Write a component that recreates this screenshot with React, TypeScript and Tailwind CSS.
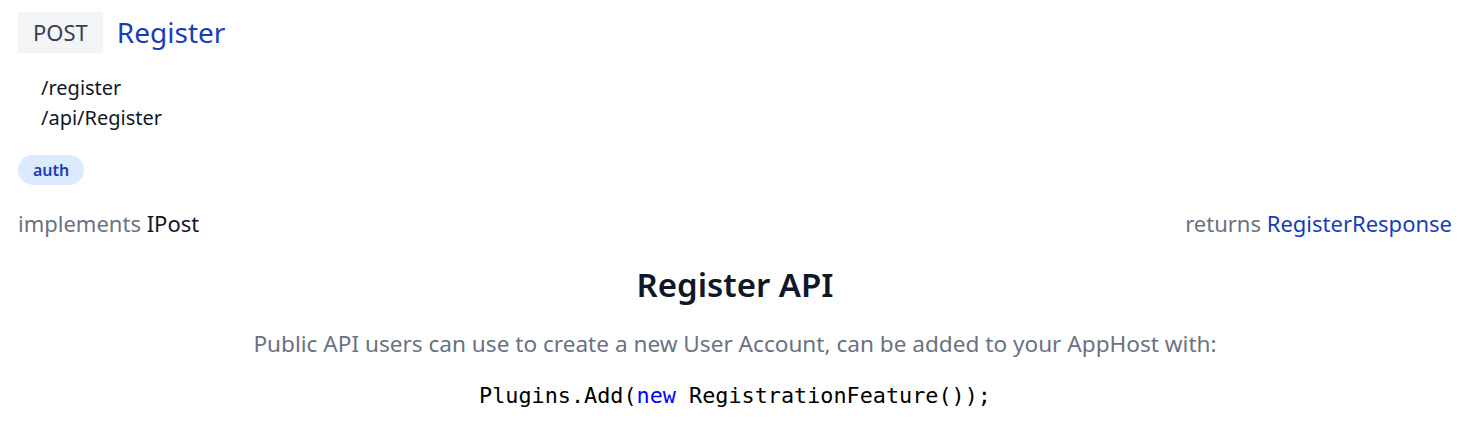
export default function App() {
  return (
    <div className="min-h-[442px] bg-white pl-[18px] pr-[22px] pt-[11px] font-['Noto_Sans',sans-serif] text-gray-900">
      {/* Header */}
      <div className="flex items-center gap-[14px]">
        <span className="flex h-[41px] items-center bg-gray-100 px-[15px] text-[22px] text-gray-700">
          POST
        </span>
        <h2 className="text-[28px] text-blue-800">Register</h2>
      </div>
      {/* Routes */}
      <div className="mt-[20px] pl-[23px] text-[20px] leading-[30px]">
        <div>/register</div>
        <div>/api/Register</div>
      </div>
      {/* Tags */}
      <div className="mt-[22px] flex">
        <span className="flex h-[30px] items-center rounded-full bg-blue-100 px-[15px] text-[16px] font-semibold text-blue-800">
          auth
        </span>
      </div>
      {/* Implements - returns */}
      <div className="mt-[22px] flex justify-between text-[22px] leading-[32px]">
        <div className="text-gray-500">
          implements <span className="text-gray-900">IPost</span>
        </div>
        <div className="text-gray-500">
          returns <span className="text-blue-800">RegisterResponse</span>
        </div>
      </div>
      {/* Description */}
      <div className="mt-[24px] text-center">
        <h3 className="text-[33px] font-semibold leading-[44px]">Register API</h3>
        <p className="mt-[20px] text-[22.6px] text-gray-500">
          Public API users can use to create a new User Account, can be added to your AppHost with:
        </p>
        <pre className="mt-[19px] font-['DejaVu_Sans_Mono',monospace] text-[21.8px] text-black">
          Plugins.Add(<span className="text-[#0000ff]">new</span> RegistrationFeature());
        </pre>
      </div>
    </div>
  );
}
